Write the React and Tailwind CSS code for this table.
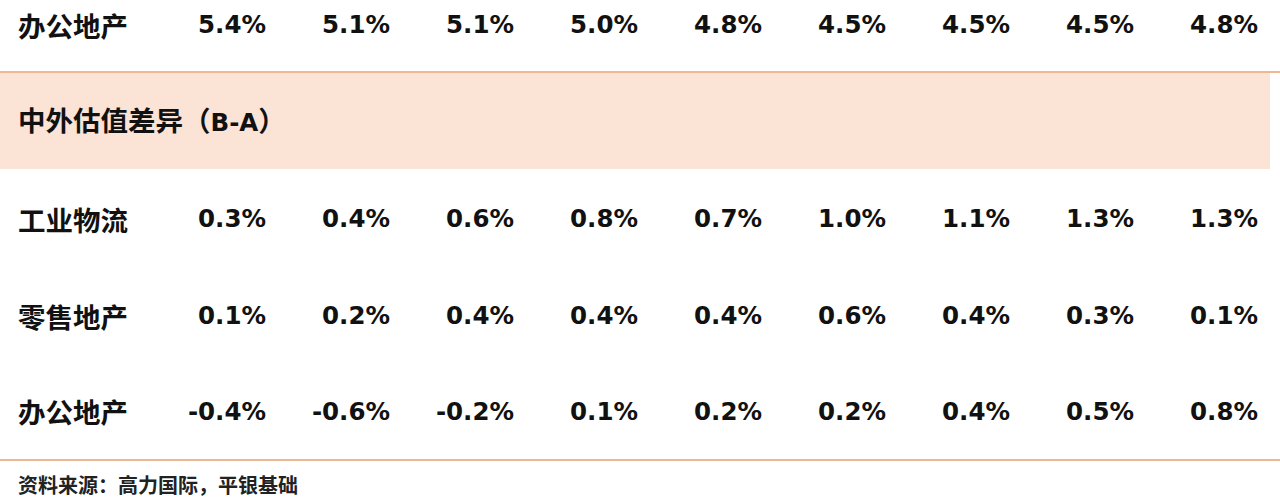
import React from 'react';

const rows = [
  { name: "工业物流", vals: ["0.3%", "0.4%", "0.6%", "0.8%", "0.7%", "1.0%", "1.1%", "1.3%", "1.3%"] },
  { name: "零售地产", vals: ["0.1%", "0.2%", "0.4%", "0.4%", "0.4%", "0.6%", "0.4%", "0.3%", "0.1%"] },
  { name: "办公地产", vals: ["-0.4%", "-0.6%", "-0.2%", "0.1%", "0.2%", "0.2%", "0.4%", "0.5%", "0.8%"] },
];

const top = ["5.4%", "5.1%", "5.1%", "5.0%", "4.8%", "4.5%", "4.5%", "4.5%", "4.8%"];

const cjk = { fontFamily: '"Noto Sans CJK SC", sans-serif' };
const num = { fontFamily: '"DejaVu Sans", "Noto Sans CJK SC", sans-serif' };

const Row = ({ name, vals, className }) => (
  <div className={"grid grid-cols-[142px_repeat(9,124px)] items-center " + className}>
    <div className="pl-[18px] text-[27.5px] font-bold text-[#111]" style={cjk}>{name}</div>
    {vals.map((v, i) => (
      <div key={i} className="text-right text-[24.5px] font-bold text-[#111]" style={num}>
        {v}
      </div>
    ))}
  </div>
);

export default function App() {
  return (
    <div className="w-[1280px] h-[498px] bg-white overflow-hidden">
      <Row name="办公地产" vals={top} className="h-[71px] pb-[20px]" />
      <div className="h-[2px] bg-[#f2b690]" />
      <div className="h-[96px] w-[1270px] bg-[#fbe3d5] flex items-center pb-[2px]">
        <span className="pl-[18px] text-[27.5px] font-bold text-[#111]" style={cjk}>
          中外估值差异（<span style={num} className="text-[24.5px]">B-A</span>）
        </span>
      </div>
      {rows.map((r, i) => (
        <Row key={i} name={r.name} vals={r.vals} className={i === 2 ? "h-[96px] pt-[2px]" : "h-[97px] pt-[4px]"} />
      ))}
      <div className="h-[2px] bg-[#edb593]" />
      <div className="pl-[18px] pt-[14px] text-[20px] leading-none font-bold text-[#222]" style={cjk}>
        资料来源：高力国际，平银基础
      </div>
    </div>
  );
}
